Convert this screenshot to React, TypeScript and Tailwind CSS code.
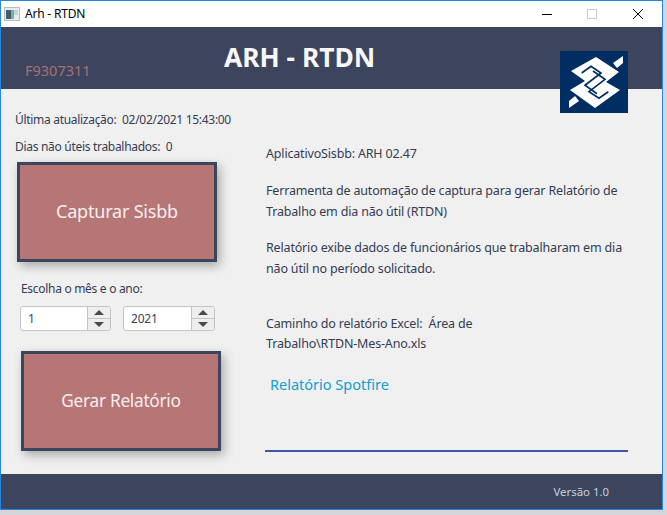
import React from 'react';

const font = { fontFamily: '"Noto Sans", "Open Sans", sans-serif' };

const BbLogo = () => (
  <svg viewBox="0 0 68 62" className="absolute left-[559px] top-[50px] h-[62px] w-[68px]">
    <rect width="68" height="62" fill="#002d62" />
    <g fill="#fff">
      <path d="M36 6 L59 21 L46 31 L60 39 L35 57 L10 39 L25 30 L11 20 Z" />
      <path d="M53 12 L63 5 L63 12 L57 17 Z" />
      <path d="M19 50 L9 57 L9 50 L15 45 Z" />
    </g>
    <g fill="none" stroke="#002d62" strokeWidth="1.7">
      <path d="M21.7 22 L31 15.3 L41 22 L25 34.3 L37 42.7" />
      <path d="M48.3 40.7 L39 47.3 L29 40.7 L45 28.3 L33 20" />
    </g>
  </svg>
);

const Spinner = ({ value, width }: { value: string; width: string }) => (
  <div className={`flex h-[25px] ${width} overflow-hidden rounded-[3px] border border-[#c4c4c4] bg-white`}>
    <div className="flex-1 pl-[7px] text-[12px] leading-[23px] tracking-[-0.2px] text-[#3a4257]">{value}</div>
    <div className="flex w-[23px] flex-col border-l border-[#c4c4c4] bg-[#eeeeee]">
      <div className="flex h-[12px] items-center justify-center border-b border-[#c4c4c4]">
        <span className="h-0 w-0 border-x-[5px] border-b-[5px] border-x-transparent border-b-[#4a4a4a]" />
      </div>
      <div className="flex flex-1 items-center justify-center">
        <span className="h-0 w-0 border-x-[5px] border-t-[5px] border-x-transparent border-t-[#4a4a4a]" />
      </div>
    </div>
  </div>
);

const BigButton = ({ label, extra }: { label: string; extra: string }) => (
  <button className={`flex h-[100px] w-[200px] items-center justify-center border-[3px] border-[#3c455d] bg-[#b67676] text-[#f5eeee] shadow-[3px_4px_10px_rgba(0,0,0,0.3)] ${extra}`}>
    {label}
  </button>
);

const App: React.FC = () => {
  return (
    <div className="h-[515px] w-[667px] bg-[#d3d5da]" style={font}>
      <div className="relative flex h-[510px] w-[663px] flex-col overflow-hidden border border-[#2a86d8] bg-[#f0f0f0] text-[#343c52]">
        {/* Title bar */}
        <div className="flex h-[26px] items-center bg-white text-black">
          <svg viewBox="0 0 16 16" className="ml-[3px] h-[16px] w-[16px]">
            <rect x="0.5" y="1.5" width="15" height="13" fill="#e8ecef" stroke="#b8bcc0" />
            <rect x="2" y="4" width="5" height="9" fill="#3f5f6f" />
            <rect x="7" y="4" width="3" height="9" fill="#7fae9a" />
            <rect x="10" y="4" width="4" height="5" fill="#c8d4dc" />
          </svg>
          <span className="ml-[5px] text-[12px] tracking-[-0.2px]">Arh - RTDN</span>
          <div className="ml-auto flex items-center">
            <span className="mr-[35px] h-px w-[10px] bg-black" />
            <span className="mr-[36px] h-[10px] w-[10px] border border-[#cccccc]" />
            <svg viewBox="0 0 10 10" className="mr-[19px] h-[10px] w-[10px]" stroke="#000" strokeWidth="1">
              <path d="M0 0 L10 10 M10 0 L0 10" />
            </svg>
          </div>
        </div>

        {/* Header */}
        <div className="flex h-[62px] bg-[#3c455d]">
          <div className="w-[223px] pl-[24px] pt-[33px] text-[14.5px] leading-[20px] text-[#a87074]">F9307311</div>
          <div className="pt-[12px] text-[26.4px] font-bold leading-[36px] text-[#f7f7f7]">ARH - RTDN</div>
        </div>

        {/* Body */}
        <div className="flex flex-1">
          <div className="w-[265px] shrink-0 text-[12px] tracking-[-0.3px]">
            <div className="ml-[14px] mt-[23px] leading-[16px]">Última atualização:&nbsp; 02/02/2021 15:43:00</div>
            <div className="ml-[14px] mt-[11px] leading-[16px]">Dias não úteis trabalhados:&nbsp; 0</div>
            <BigButton label="Capturar Sisbb" extra="ml-[16px] mt-[7px] pb-[2px] text-[18px] tracking-[-0.2px]" />
            <div className="ml-[20px] mt-[19px] leading-[16px]">Escolha o mês e o ano:</div>
            <div className="ml-[19px] mt-[9px] flex gap-[12px]">
              <Spinner value="1" width="w-[91px]" />
              <Spinner value="2021" width="w-[92px]" />
            </div>
            <BigButton label="Gerar Relatório" extra="ml-[20px] mt-[20px] text-[17.3px] tracking-[-0.3px]" />
          </div>
          <div className="flex-1 pr-[34px] text-[12.5px] leading-[21px] tracking-[-0.17px]">
            <p className="mt-[54px]">AplicativoSisbb: ARH 02.47</p>
            <p className="mt-[16px]">Ferramenta de automação de captura para gerar Relatório de<br />Trabalho em dia não útil (RTDN)</p>
            <p className="mt-[15px]">Relatório exibe dados de funcionários que trabalharam em dia<br />não útil no período solicitado.</p>
            <p className="mt-[35px] leading-[20px]">Caminho do relatório Excel:&nbsp; Área de<br />Trabalho\RTDN-Mes-Ano.xls</p>
            <p className="ml-[4px] mt-[20px] text-[14.5px] tracking-normal text-[#0f9fd2]">Relatório Spotfire</p>
            <div className="-ml-px mt-[55px] h-[2px] bg-[#3f55a8]" />
          </div>
        </div>

        {/* Footer */}
        <div className="flex h-[35px] items-center justify-end bg-[#3c455d] pr-[53px] text-[11.4px] text-[#c6d2da]">Versão 1.0</div>

        <BbLogo />
      </div>
    </div>
  );
};

export default App;
